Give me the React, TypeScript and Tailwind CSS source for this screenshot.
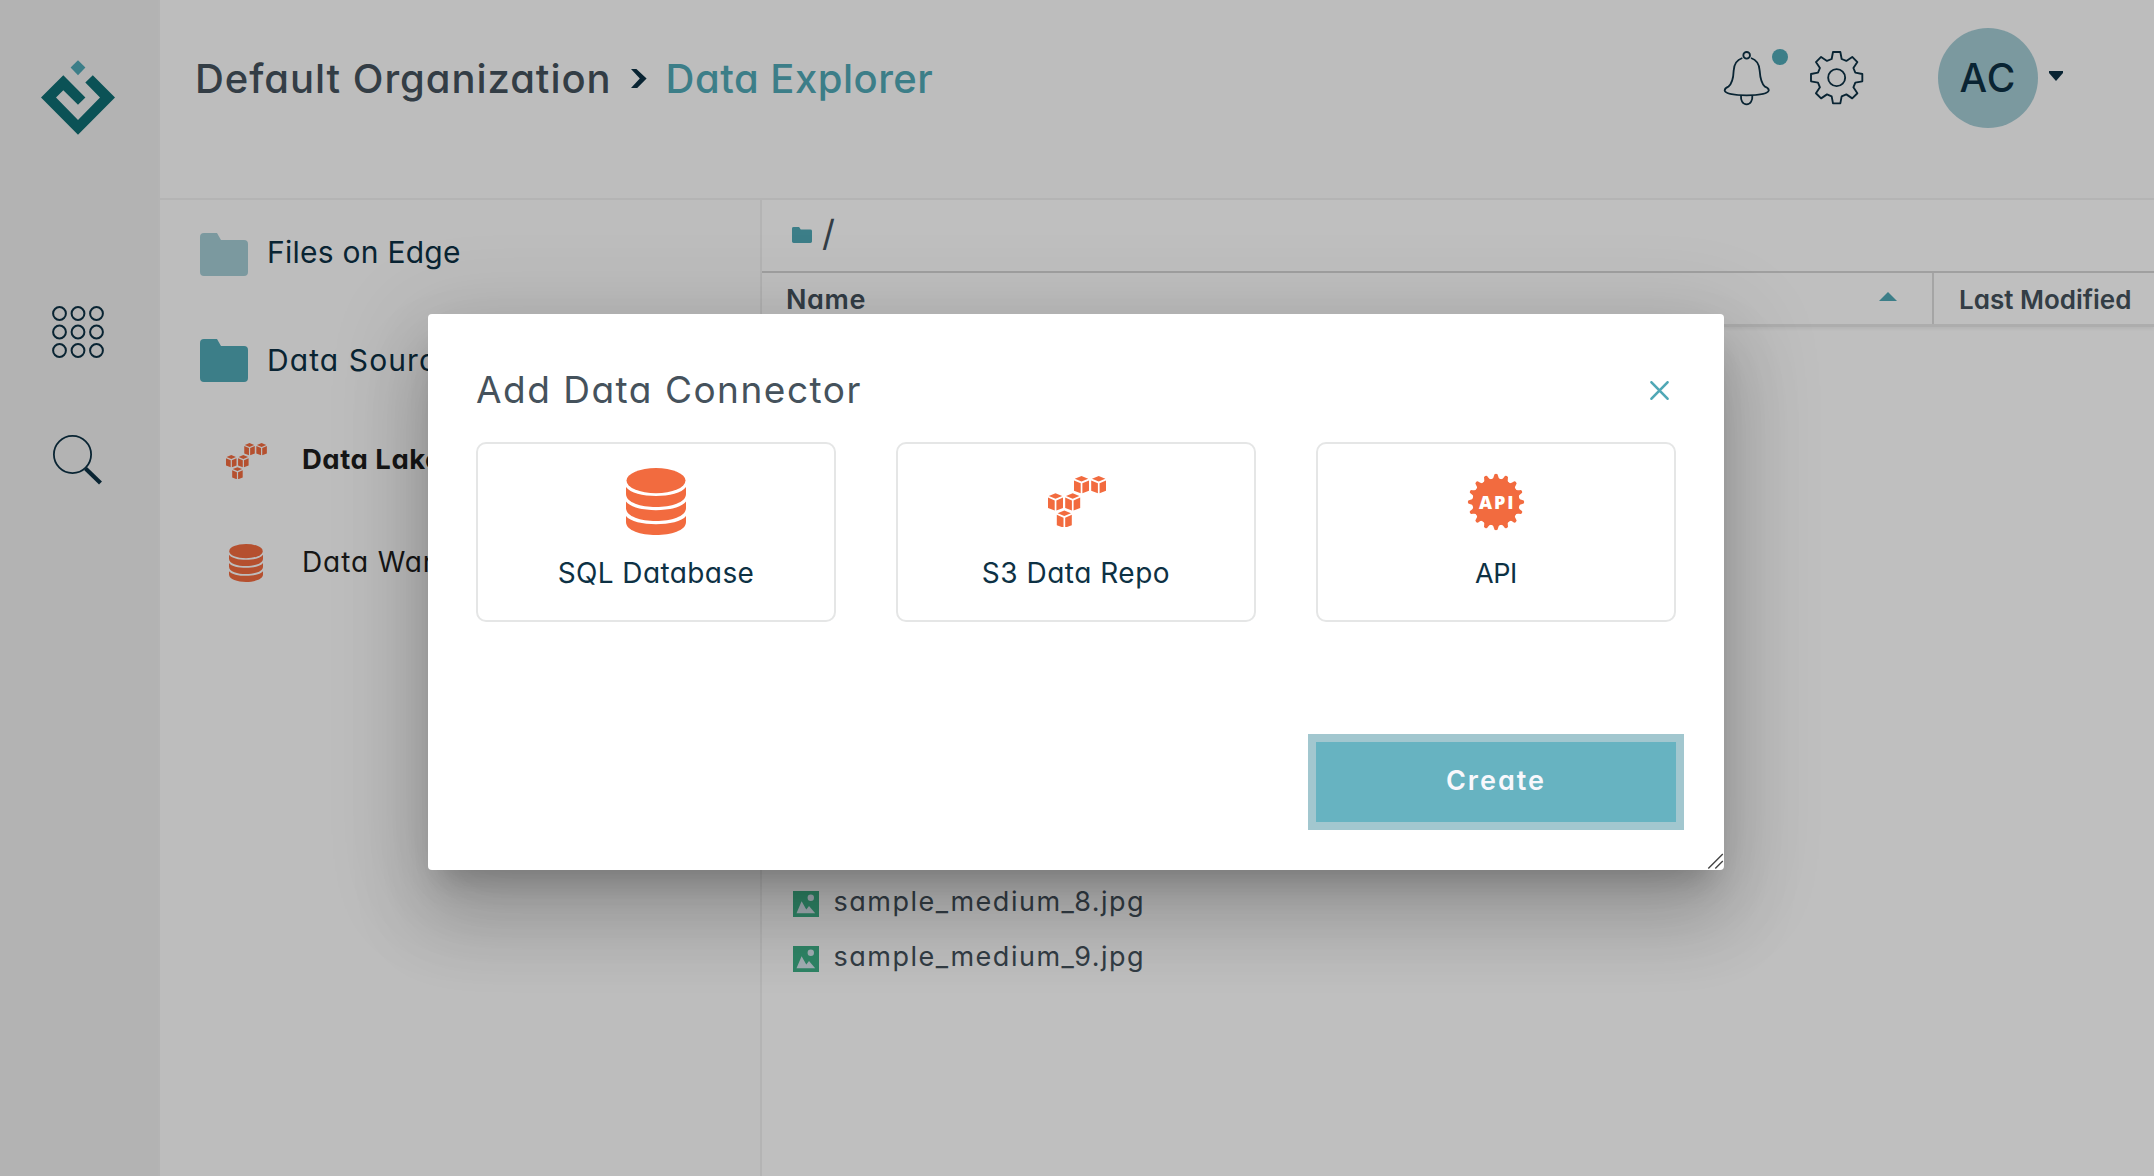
import type { ReactNode } from "react";

function Logo() {
  return (
    <svg width="74" height="75" viewBox="41 59.5 74 75">
      <path d="M78 59.7l7.4 7.4-7.4 7.6-7.4-7.6z" fill="#50a8b6" />
      <path
        d="M41 97l22.3-22.2L85.4 97 78 104.3 63.3 89.7 56 97l22 22.5L100 97 85.3 82l7.5-7.2L115 97l-37 37.3z"
        fill="#0f6e73"
      />
    </svg>
  );
}

function AppsIcon() {
  const pos = [7.5, 26, 44.5];
  return (
    <svg width="52" height="52" viewBox="0 0 52 52" fill="none" stroke="#0d3144" strokeWidth="2">
      {pos.map((y) => pos.map((x) => <circle key={`${x}-${y}`} cx={x} cy={y} r="6.4" />))}
    </svg>
  );
}

function SearchIcon() {
  return (
    <svg width="52" height="52" viewBox="0 0 52 52" fill="none" stroke="#0d3144">
      <circle cx="20.5" cy="20.5" r="18.6" strokeWidth="1.8" />
      <path d="M33.5 34.5L48.5 49" strokeWidth="4.2" />
    </svg>
  );
}

function BellIcon() {
  return (
    <svg
      width="47.33"
      height="56"
      viewBox="130 150 142 168"
      fill="none"
      stroke="#0d3144"
      strokeWidth="5.4"
    >
      <circle cx="201" cy="166" r="10" />
      <path d="M188 174C170 180 163 192 162 212C161 240 155 253 146 260C136 264 135 268 135 272C137 281 165 286 201 286C237 286 265 281 267 272C268 268 266 264 256 260C247 253 242 240 240 212C239 192 232 180 214 174" />
      <path d="M184 287C183 300 188 313 201 313C213 313 219 300 218 287" />
    </svg>
  );
}

const toothPoints: [number, number][] = [
  [-15, -56],
  [-11, -77],
  [11, -77],
  [15, -56],
];

function GearIcon() {
  const points = Array.from({ length: 8 }, (_, i) => {
    const a = (i * Math.PI) / 4;
    return toothPoints
      .map(
        ([x, y]) =>
          `${(x * Math.cos(a) - y * Math.sin(a)).toFixed(1)},${(x * Math.sin(a) + y * Math.cos(a)).toFixed(1)}`,
      )
      .join(" ");
  }).join(" ");
  return (
    <svg
      width="55.33"
      height="55.33"
      viewBox="-83 -83 166 166"
      fill="none"
      stroke="#0d3144"
      strokeWidth="5.6"
      strokeLinejoin="round"
    >
      <polygon points={points} />
      <circle r="25.5" />
    </svg>
  );
}

function FolderIcon({ className }: { className: string }) {
  return (
    <svg className={className} viewBox="0 0 48 43" preserveAspectRatio="none" fill="currentColor">
      <path d="M4 0H17L21 7H44A4 4 0 0 1 48 11V39A4 4 0 0 1 44 43H4A4 4 0 0 1 0 39V4A4 4 0 0 1 4 0Z" />
    </svg>
  );
}

function DatabaseIcon({ className }: { className: string }) {
  return (
    <svg className={className} viewBox="0 0 60 67" fill="#f26b3f">
      <ellipse cx="30" cy="12.6" rx="29.5" ry="12.6" />
      <path d="M0 19C8 31 52 31 60 19V26C60 43.3 0 43.3 0 26Z" />
      <path d="M0 33.5C8 45 52 45 60 33.5V40C60 57.3 0 57.3 0 40Z" />
      <path d="M0 48C8 59 52 59 60 48V54C60 71.3 0 71.3 0 54Z" />
    </svg>
  );
}

const cubes = [
  [26, 0],
  [43.2, 0],
  [0, 17.2],
  [17.2, 17.2],
  [8.8, 34.4],
];

function BucketCubesIcon({ className }: { className: string }) {
  return (
    <svg className={className} viewBox="0 0 58.4 52" fill="#f26b3f">
      {cubes.map(([x, y]) => (
        <path
          key={`${x}-${y}`}
          transform={`translate(${x} ${y})`}
          d="M7.5 0L14.2 2.8L7.5 5.6L.8 2.8ZM0 4.4L6.7 7.3V17.3L0 14.8ZM15 4.4L8.4 7.3V17.3L15 14.8Z"
        />
      ))}
    </svg>
  );
}

function ApiIcon() {
  return (
    <svg width="58" height="58" viewBox="-29 -29 58 58">
      <circle r="23.6" fill="#f26b3f" />
      {Array.from({ length: 16 }, (_, i) => (
        <path
          key={i}
          transform={`rotate(${i * 22.5})`}
          d="M-4.4 -22.5Q-2.3 -23.6 -2 -26.2A2 2 0 0 1 2 -26.2Q2.3 -23.6 4.4 -22.5Z"
          fill="#f26b3f"
        />
      ))}
      <text
        x="1.2"
        y="6.6"
        textAnchor="middle"
        fill="#fff"
        className="font-['Open_Sans'] text-[18px] font-extrabold tracking-[1.9px]"
      >
        API
      </text>
    </svg>
  );
}

function ImageIcon() {
  return (
    <svg width="26" height="26" viewBox="0 0 26 26">
      <rect width="26" height="26" fill="#3fb289" />
      <circle cx="17.8" cy="6.8" r="3.2" fill="#d9e8f0" />
      <path d="M3.5 22.2L8.6 10.2L13.3 18.4L16 15L22.2 22.2Z" fill="#d9e8f0" />
    </svg>
  );
}

function Sidebar() {
  return (
    <aside className="flex w-40 shrink-0 flex-col items-center border-r-2 border-[#f1f1f1] bg-[#efefef] pr-0.5">
      <div className="mt-[59.5px]">
        <Logo />
      </div>
      <div className="mt-[171.5px]">
        <AppsIcon />
      </div>
      <div className="mt-[75.5px]">
        <SearchIcon />
      </div>
    </aside>
  );
}

function Header() {
  return (
    <header className="h-[200px] shrink-0 border-b-2 border-[#f1f1f1] bg-[#fcfcfc]">
      <div className="flex h-[156px] items-center pl-[35px] pr-[91px]">
        <span className="pt-px text-[40px] font-medium tracking-[0.95px] text-[#45525c]">
          Default Organization
        </span>
        <svg className="ml-[19px]" width="16" height="19" viewBox="0 0 16 19" fill="#0d3144">
          <path d="M0 0H5.4L15.6 9.4L6.2 19H0L8.8 9.4Z" />
        </svg>
        <span className="ml-[19px] pt-px text-[40px] font-medium tracking-[0.5px] text-[#50a8b6]">
          Data Explorer
        </span>
        <div className="ml-auto flex items-center">
          <div className="relative">
            <BellIcon />
            <span className="absolute -top-px left-[49px] size-4 rounded-full bg-[#50a8b6]" />
          </div>
          <div className="ml-[38.5px]">
            <GearIcon />
          </div>
          <div className="ml-[74px] flex size-[100px] items-center justify-center rounded-full bg-[#a5ccd5] pt-px text-[39px] font-medium tracking-[1px] text-[#0d3144]">
            AC
          </div>
          <svg className="mb-1 ml-[11px]" width="14" height="10" viewBox="0 0 14 10" fill="#0d3144">
            <path d="M0 0H14V2L7 10L0 2Z" />
          </svg>
        </div>
      </div>
    </header>
  );
}

function SourceTree() {
  return (
    <nav className="w-[602px] shrink-0 border-r-2 border-[#f1f1f1] bg-[#fdfdfd] pt-[1.5px]">
      <div className="flex h-[106px] items-center pl-10 text-[30px] text-[#0d3144]">
        <FolderIcon className="h-[43px] w-12 text-[#a5ccd5]" />
        <span className="mb-[5px] ml-[19px] tracking-[0.25px]">Files on Edge</span>
      </div>
      <div className="flex h-[106px] items-center pl-10 text-[30px] text-[#0d3144]">
        <FolderIcon className="h-[43px] w-12 text-[#50a8b6]" />
        <span className="mb-px ml-[19px] tracking-[1.1px]">Data Sources</span>
      </div>
      <div className="-mt-1 flex h-[103px] items-center pl-[66px] text-[27.5px] font-bold text-[#1e1e1e]">
        <BucketCubesIcon className="w-[41px]" />
        <span className="mb-0.5 ml-[35px] tracking-[0.5px]">Data Lakes</span>
      </div>
      <div className="flex h-[101px] items-center pl-[66px] text-[28px] text-[#1e1e1e]">
        <span className="flex w-10 justify-center">
          <DatabaseIcon className="w-[34px]" />
        </span>
        <span className="mb-[3px] ml-9 tracking-[0.9px]">Data Warehouse</span>
      </div>
    </nav>
  );
}

const files = ["sample_medium_8.jpg", "sample_medium_9.jpg"];

function FileTable() {
  return (
    <main className="min-w-0 grow bg-white text-[27px] text-[#45525c]">
      <div className="flex h-[71px] items-center pl-[30px]">
        <FolderIcon className="mb-px h-4 w-5 text-[#50a8b6]" />
        <span className="mb-1.5 ml-[10px] text-[36px] leading-none">/</span>
      </div>
      <div className="flex h-[56px] border-t-2 border-b-3 border-t-[#d6d6d6] border-b-[#e7e7e7] shadow-[0_2px_3px_rgba(0,0,0,0.06)]">
        <div className="flex grow items-center justify-between border-r-2 border-[#dddddd] pl-6 pr-[35px]">
          <span className="pt-1 font-semibold tracking-[0.6px]">Name</span>
          <svg className="mb-1" width="18" height="9" viewBox="0 0 18 9" fill="#50a8b6">
            <path d="M9 0L18 9H0Z" />
          </svg>
        </div>
        <div className="w-[220px] shrink-0 whitespace-nowrap pl-[25px] pt-[7px] text-[26px] font-semibold">
          Last Modified
        </div>
      </div>
      <div className="pt-[549px]">
        {files.map((name) => (
          <div key={name} className="flex h-[55px] items-center pl-[31px]">
            <ImageIcon />
            <span className="mb-0.5 ml-[14.5px] tracking-[1.5px]">{name}</span>
          </div>
        ))}
      </div>
    </main>
  );
}

function ConnectorCard({ label, children }: { label: ReactNode; children: ReactNode }) {
  return (
    <button className="flex h-[180px] flex-1 flex-col items-center rounded-[10px] border-2 border-[#e5e6e6] pt-6 text-[28px] text-[#0d3144]">
      <span className="flex h-[67px] items-center">{children}</span>
      <span className="mt-[18px] leading-10">{label}</span>
    </button>
  );
}

function ConnectorDialog() {
  return (
    <div
      role="dialog"
      className="relative h-[556px] w-[1296px] rounded bg-white px-12 pt-6 shadow-[0_22px_30px_-14px_rgba(0,0,0,0.2),0_48px_76px_6px_rgba(0,0,0,0.14),0_18px_92px_16px_rgba(0,0,0,0.12)]"
    >
      <div className="flex h-[104px] items-center justify-between pr-[7px]">
        <h2 className="mb-px text-[37px] tracking-[1.5px] text-[#45525c]">Add Data Connector</h2>
        <svg
          className="mt-px"
          width="19"
          height="19"
          viewBox="0 0 19 19"
          stroke="#50a8b6"
          strokeWidth="2.6"
          strokeLinecap="round"
        >
          <path d="M1.5 1.3L17.5 17.7M17.5 1.3L1.5 17.7" />
        </svg>
      </div>
      <div className="flex gap-[60px]">
        <ConnectorCard label={<span className="tracking-[0.4px]">SQL Database</span>}>
          <DatabaseIcon className="w-[60px]" />
        </ConnectorCard>
        <ConnectorCard label={<span className="tracking-[0.5px]">S3 Data Repo</span>}>
          <BucketCubesIcon className="ml-0.5 w-[58.4px]" />
        </ConnectorCard>
        <ConnectorCard label={<span className="text-[27px] tracking-[-0.4px]">API</span>}>
          <ApiIcon />
        </ConnectorCard>
      </div>
      <div className="-mr-2 mt-28 flex justify-end">
        <button className="h-24 w-[376px] border-8 border-[#a2c7cf] bg-[#67b3c1] pb-px text-[27px] font-semibold tracking-[2px] text-[#f8f8fc]">
          Create
        </button>
      </div>
      <svg
        className="absolute right-0 bottom-0"
        width="17"
        height="17"
        viewBox="0 0 17 17"
        stroke="#444"
        strokeWidth="1.4"
      >
        <path d="M1.3 15.5L15.8 1M8.3 15.5L15.8 8" />
      </svg>
    </div>
  );
}

export default function App() {
  return (
    <div className="relative flex h-[1176px] w-[2154px] overflow-hidden bg-white font-['Inter',sans-serif] [font-feature-settings:'cv11']">
      <Sidebar />
      <div className="flex min-w-0 grow flex-col">
        <Header />
        <div className="flex grow">
          <SourceTree />
          <FileTable />
        </div>
      </div>
      <div className="absolute inset-0 bg-black/25 pl-[428px] pt-[314px]">
        <ConnectorDialog />
      </div>
    </div>
  );
}
